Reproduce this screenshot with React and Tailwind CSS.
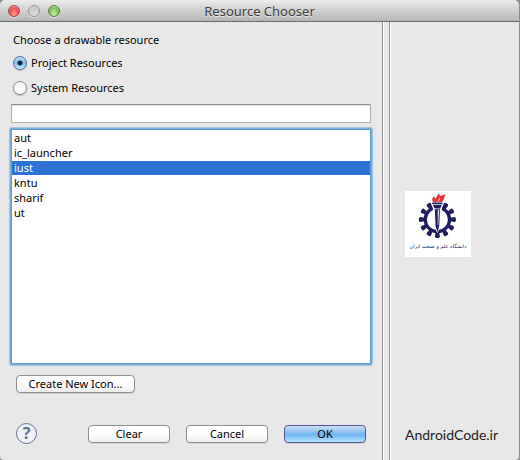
import { useState } from 'react'
import clsx from 'clsx'

const RESOURCES = ['aut', 'ic_launcher', 'iust', 'kntu', 'sharif', 'ut']
const TEETH = [30, 60, 90, 120, 150, 180, 210, 240, 270, 300, 330]

function TitleBar() {
  return (
    <header className="grid h-[22px] shrink-0 grid-cols-[1fr_auto_1fr] items-center rounded-t-[5px] border-b border-[#6b6b6b] bg-linear-to-b from-[#ececec] to-[#b5b5b5] px-2">
      <div className="flex gap-2">
        <button
          aria-label="Close"
          className="size-3 rounded-full border border-[#a04a4a] bg-radial-[at_50%_80%] from-[#ffa59b] via-[#ee5450] to-[#d03034] shadow-[inset_0_1px_1px_#ffffff88,0_1px_0_#ffffff88]"
        />
        <button
          aria-label="Minimize"
          disabled
          className="size-3 rounded-full border border-[#929292] bg-linear-to-b from-[#c4c4c4] to-[#dcdcdc] shadow-[inset_0_1px_1px_#ffffff66,0_1px_0_#ffffff88]"
        />
        <button
          aria-label="Zoom"
          className="size-3 rounded-full border border-[#4f8540] bg-radial-[at_50%_80%] from-[#c9f3a4] via-[#85c862] to-[#57983f] shadow-[inset_0_1px_1px_#ffffff88,0_1px_0_#ffffff88]"
        />
      </div>
      <h1 className="text-[13px] leading-4 text-[#3c3c3c] [text-shadow:0_1px_0_#ffffff99]">
        Resource Chooser
      </h1>
    </header>
  )
}

function Radio({ label, ...props }) {
  return (
    <label className="flex h-[25px] items-center gap-1">
      <input
        type="radio"
        name="source"
        className="size-[14px] appearance-none rounded-full border border-[#8a8a8a] bg-linear-to-b from-[#f2f2f2] to-white shadow-[0_1px_1px_#00000033] checked:border-[#5a6fa5] checked:bg-[radial-gradient(circle,#10233c_0_2px,transparent_3px),linear-gradient(#c3dcf5,#7db8ee_50%,#c4f0ff)]"
        {...props}
      />
      {label}
    </label>
  )
}

function PushButton({ primary, className, children }) {
  return (
    <button
      className={clsx(
        'h-[18px] rounded-[4px] border leading-4 shadow-[0_1px_0_#00000018]',
        primary
          ? 'border-[#54549c] bg-linear-to-b from-[#c2dcf6] from-5% via-[#72b3ee] via-55% to-[#b5e6ff]'
          : 'border-[#8e8e8e] bg-linear-to-b from-white from-50% to-[#ececec]',
        className,
      )}
    >
      {children}
    </button>
  )
}

function UniversityLogo() {
  return (
    <svg viewBox="0 0 66 66" className="size-[66px] bg-white" role="img" aria-label="iust">
      <g fill="#1f1d5e">
        {TEETH.map((angle) => (
          <path
            key={angle}
            d="M30.9 17 29.9 11.4Q29.9 9.9 32.4 9.9T34.9 11.4L33.9 17Z"
            transform={`rotate(${angle} 32.4 28.5)`}
          />
        ))}
        <path
          fillRule="evenodd"
          d="M32.4 14.7a13.8 13.8 0 1 0 0 27.6a13.8 13.8 0 1 0 0-27.6ZM32.4 18a10.5 10.5 0 1 1 0 21a10.5 10.5 0 1 1 0-21Z"
        />
      </g>
      <path d="M26 10h12.8l-2.4 9.5-1.6 18-2.4 4.5-2.4-4.5-1.6-18Z" fill="#fff" />
      <path
        d="M27.2 11.6h10.4v1.7H27.2ZM28 14h8.8l-1.6 3.4h-5.6ZM29.8 18.2h5.2l-.8 17-1.8 6-1.8-6Z"
        fill="#1f1d5e"
      />
      <path d="M32.8 19h1.2l-.8 15h-.5Z" fill="#fff" />
      <path
        d="M28 11C26.5 8.5 27.5 6 29.6 5.5 29.5 6.8 30 7.4 30.7 7.3 31.8 6.8 31.4 4.6 34.4 2 34 4.6 35.2 5 36.2 4.8 38 4.3 38.6 3.5 41 3.6 39 5 40 6.5 38.7 8.6 38 9.8 37.5 10.3 37 11Z"
        fill="#e2343a"
      />
      <path d="M32.6 10.4C32 8.8 34 8.2 34.2 6.6 36 8 34.4 9 34.2 10.4Z" fill="#f9a29a" />
      <text
        x="33"
        y="57"
        textAnchor="middle"
        direction="rtl"
        fill="#24224e"
        className="font-['DejaVu_Sans',sans-serif] text-[5px]"
      >
        دانشگاه علم و صنعت ایران
      </text>
    </svg>
  )
}

export default function App() {
  const [source, setSource] = useState('project')
  const [selected, setSelected] = useState('iust')
  const [filter, setFilter] = useState('')

  return (
    <div className="flex min-h-screen flex-col bg-[#8f8f8f] pr-px font-['Noto_Sans','Open_Sans',sans-serif] text-[11px] leading-[15px] text-black">
      <TitleBar />
      <div className="flex flex-1 rounded-b-[4px] bg-[#e8e8e8]">
        <main className="flex min-w-0 flex-1 flex-col px-[9px] pb-4">
          <fieldset className="px-1 pt-[10px]">
            <legend className="float-left mb-[2px] w-full leading-4">
              Choose a drawable resource
            </legend>
            <div className="clear-both">
              <Radio
                label="Project Resources"
                checked={source === 'project'}
                onChange={() => setSource('project')}
              />
              <Radio
                label="System Resources"
                checked={source === 'system'}
                onChange={() => setSource('system')}
              />
            </div>
          </fieldset>
          <input
            type="text"
            aria-label="Filter resources"
            value={filter}
            onChange={(e) => setFilter(e.target.value)}
            className="mx-[2px] mt-1 h-[19px] border border-[#b0b0b0] border-t-[#8f8f8f] bg-white px-1 shadow-[inset_0_1px_1px_#00000022] outline-none"
          />
          <ul
            role="listbox"
            aria-label="Resources"
            className="mx-[2px] mt-[6px] flex-1 rounded-[1px] border border-[#5f9bcd] bg-white pt-px shadow-[0_0_0_1px_#74addb,0_0_1px_2px_#9cc3e4]"
          >
            {RESOURCES.filter((name) => name.includes(filter)).map((name) => (
              <li
                key={name}
                role="option"
                aria-selected={name === selected}
                onClick={() => setSelected(name)}
                className={clsx(
                  'mb-px h-[14px] px-[2px] leading-[14px]',
                  name === selected && 'bg-[#2b72d4] text-white',
                )}
              >
                {name}
              </li>
            ))}
          </ul>
          <div className="mt-[11px] flex px-[7px]">
            <PushButton className="min-w-[119px]">Create New Icon...</PushButton>
          </div>
          <footer className="mt-[30px] flex items-center justify-between px-[7px]">
            <button
              aria-label="Help"
              className="flex size-[21px] items-center justify-center rounded-full border border-[#5d7192] bg-[#f0f2f5] text-[16px] font-bold text-[#566d94]"
            >
              ?
            </button>
            <div className="flex gap-4">
              <PushButton className="w-[82px]">Clear</PushButton>
              <PushButton className="w-[82px]">Cancel</PushButton>
              <PushButton primary className="w-[82px]">
                OK
              </PushButton>
            </div>
          </footer>
        </main>
        <div className="w-[9px] shrink-0 border-x border-r-white border-l-[#949494]">
          <div className="h-full border-r border-l border-r-[#949494] border-l-white" />
        </div>
        <aside className="flex w-[128px] shrink-0 flex-col px-[14px] pb-[15px]">
          <div className="mt-[169px] flex-1">
            <UniversityLogo />
          </div>
          <p className="font-[Lato,sans-serif] text-[14px] leading-5 text-[#1c1c1c]">
            AndroidCode.ir
          </p>
        </aside>
      </div>
    </div>
  )
}
